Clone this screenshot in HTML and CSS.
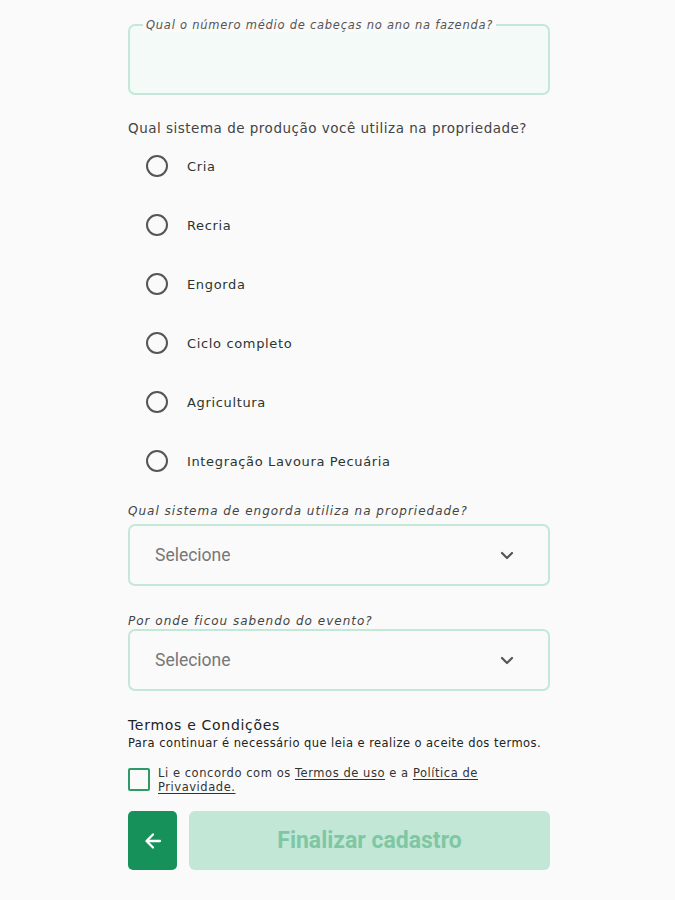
FILE: index.html
```html
<!DOCTYPE html>
<html lang="pt-BR">
<head>
<meta charset="utf-8">
<title>Cadastro</title>
<link rel="stylesheet" href="styles.css">
</head>
<body>
<main class="form">
  <fieldset class="field-outlined">
    <legend>Qual o número médio de cabeças no ano na fazenda?</legend>
  </fieldset>

  <p class="question">Qual sistema de produção você utiliza na propriedade?</p>
  <ul class="radios">
    <li class="radio"><span class="circle"></span><span class="radio-label">Cria</span></li>
    <li class="radio"><span class="circle"></span><span class="radio-label">Recria</span></li>
    <li class="radio"><span class="circle"></span><span class="radio-label">Engorda</span></li>
    <li class="radio"><span class="circle"></span><span class="radio-label">Ciclo completo</span></li>
    <li class="radio"><span class="circle"></span><span class="radio-label">Agricultura</span></li>
    <li class="radio"><span class="circle"></span><span class="radio-label">Integração Lavoura Pecuária</span></li>
  </ul>

  <div class="select-group">
    <p class="select-title">Qual sistema de engorda utiliza na propriedade?</p>
    <div class="select">
      <span>Selecione</span>
      <svg class="chev" width="14" height="9" viewBox="0 0 14 9"><path d="M2 2l5 5 5-5" fill="none" stroke="#555" stroke-width="2.2" stroke-linecap="round" stroke-linejoin="round"/></svg>
    </div>
  </div>

  <div class="select-group second">
    <p class="select-title">Por onde ficou sabendo do evento?</p>
    <div class="select">
      <span>Selecione</span>
      <svg class="chev" width="14" height="9" viewBox="0 0 14 9"><path d="M2 2l5 5 5-5" fill="none" stroke="#555" stroke-width="2.2" stroke-linecap="round" stroke-linejoin="round"/></svg>
    </div>
  </div>

  <section class="terms">
    <h2 class="terms-title">Termos e Condições</h2>
    <p class="terms-sub">Para continuar é necessário que leia e realize o aceite dos termos.</p>
    <div class="agree">
      <span class="checkbox"></span>
      <p class="agree-text">Li e concordo com os <u>Termos de uso</u> e a <u>Política de</u> <u>Privavidade.</u></p>
    </div>
  </section>

  <div class="actions">
    <button class="back" type="button" aria-label="Voltar">
      <svg width="20" height="20" viewBox="0 0 20 20"><path d="M17 10H4M10 3.5L3.5 10 10 16.5" fill="none" stroke="#fff" stroke-width="2.3" stroke-linecap="round" stroke-linejoin="round"/></svg>
    </button>
    <button class="submit" type="button">Finalizar cadastro</button>
  </div>
</main>
</body>
</html>
```

FILE: styles.css
```css
* { box-sizing: border-box; }
html, body { margin: 0; padding: 0; }
body {
  background: #fafafa;
  font-family: "DejaVu Sans", "Noto Sans", sans-serif;
  color: #333;
}
.form {
  width: 422px;
  margin-left: 128px;
  padding-top: 18px;
  display: flex;
  flex-direction: column;
}
.field-outlined {
  margin: 0;
  height: 77px;
  padding: 0 14px;
  border: 2px solid #c4e8d8;
  border-radius: 7px;
  background: #f3faf7;
}
.field-outlined legend {
  padding: 0 3px;
  margin-left: -1px;
  font-size: 11.5px;
  letter-spacing: 0.75px;
  font-style: italic;
  color: #555;
  background: #fafafa;
}
.question {
  margin: 24px 0 0;
  font-size: 13.5px;
  letter-spacing: 0.5px;
  color: #444;
  line-height: 18px;
}
.radios {
  list-style: none;
  margin: 18px 0 0;
  padding: 0 0 0 18px;
  display: flex;
  flex-direction: column;
  gap: 37px;
}
.radio {
  display: flex;
  align-items: center;
  gap: 19px;
  height: 22px;
}
.circle {
  width: 22px;
  height: 22px;
  border: 2px solid #555;
  border-radius: 50%;
  flex: none;
}
.radio-label {
  font-size: 13px;
  letter-spacing: 0.65px;
  color: #2a3530;
}
.select-group { margin-top: 14px; }
.radios + .select-group { margin-top: 32px; }
.select-group.second { margin-top: 28px; }
.select-title {
  margin: 0 0 6px;
  font-size: 12px;
  letter-spacing: 1px;
  font-style: italic;
  color: #444;
  line-height: 14px;
}
.second .select-title { margin-bottom: 1px; }
.select {
  height: 62px;
  border: 2px solid #c4e8d8;
  border-radius: 7px;
  background: #fafafa;
  display: flex;
  align-items: center;
  justify-content: space-between;
  padding: 0 34px 0 25px;
  font-family: Roboto, "Liberation Sans", sans-serif;
  font-size: 17.5px;
  color: #777;
}
.terms { margin-top: 26px; }
.terms-title {
  margin: 0;
  font-size: 14px;
  letter-spacing: 0.7px;
  font-weight: normal;
  color: #222;
  line-height: 17px;
}
.terms-sub {
  margin: 2px 0 0;
  font-size: 11.5px;
  letter-spacing: 0.45px;
  color: #222;
  line-height: 14px;
}
.agree {
  margin-top: 16px;
  display: flex;
  gap: 8px;
  align-items: flex-start;
}
.checkbox {
  width: 22px;
  height: 23px;
  border: 2px solid #2f9a67;
  border-radius: 2px;
  flex: none;
  margin-top: 2px;
}
.agree-text {
  margin: 0;
  font-size: 11.5px;
  letter-spacing: 0.55px;
  line-height: 14px;
  color: #333;
  width: 340px;
}
.agree-text u { text-underline-offset: 2px; }
.actions {
  margin-top: 17px;
  display: flex;
  gap: 12px;
}
.back {
  width: 49px;
  height: 59px;
  border: none;
  border-radius: 5px;
  background: #16915a;
  display: flex;
  align-items: center;
  justify-content: center;
  padding: 0;
}
.submit {
  flex: 1;
  height: 59px;
  border: none;
  border-radius: 6px;
  background: #c2e7d6;
  color: #7fc7a4;
  font-family: Roboto, "Liberation Sans", sans-serif;
  font-weight: bold;
  font-size: 23px;
}
```
